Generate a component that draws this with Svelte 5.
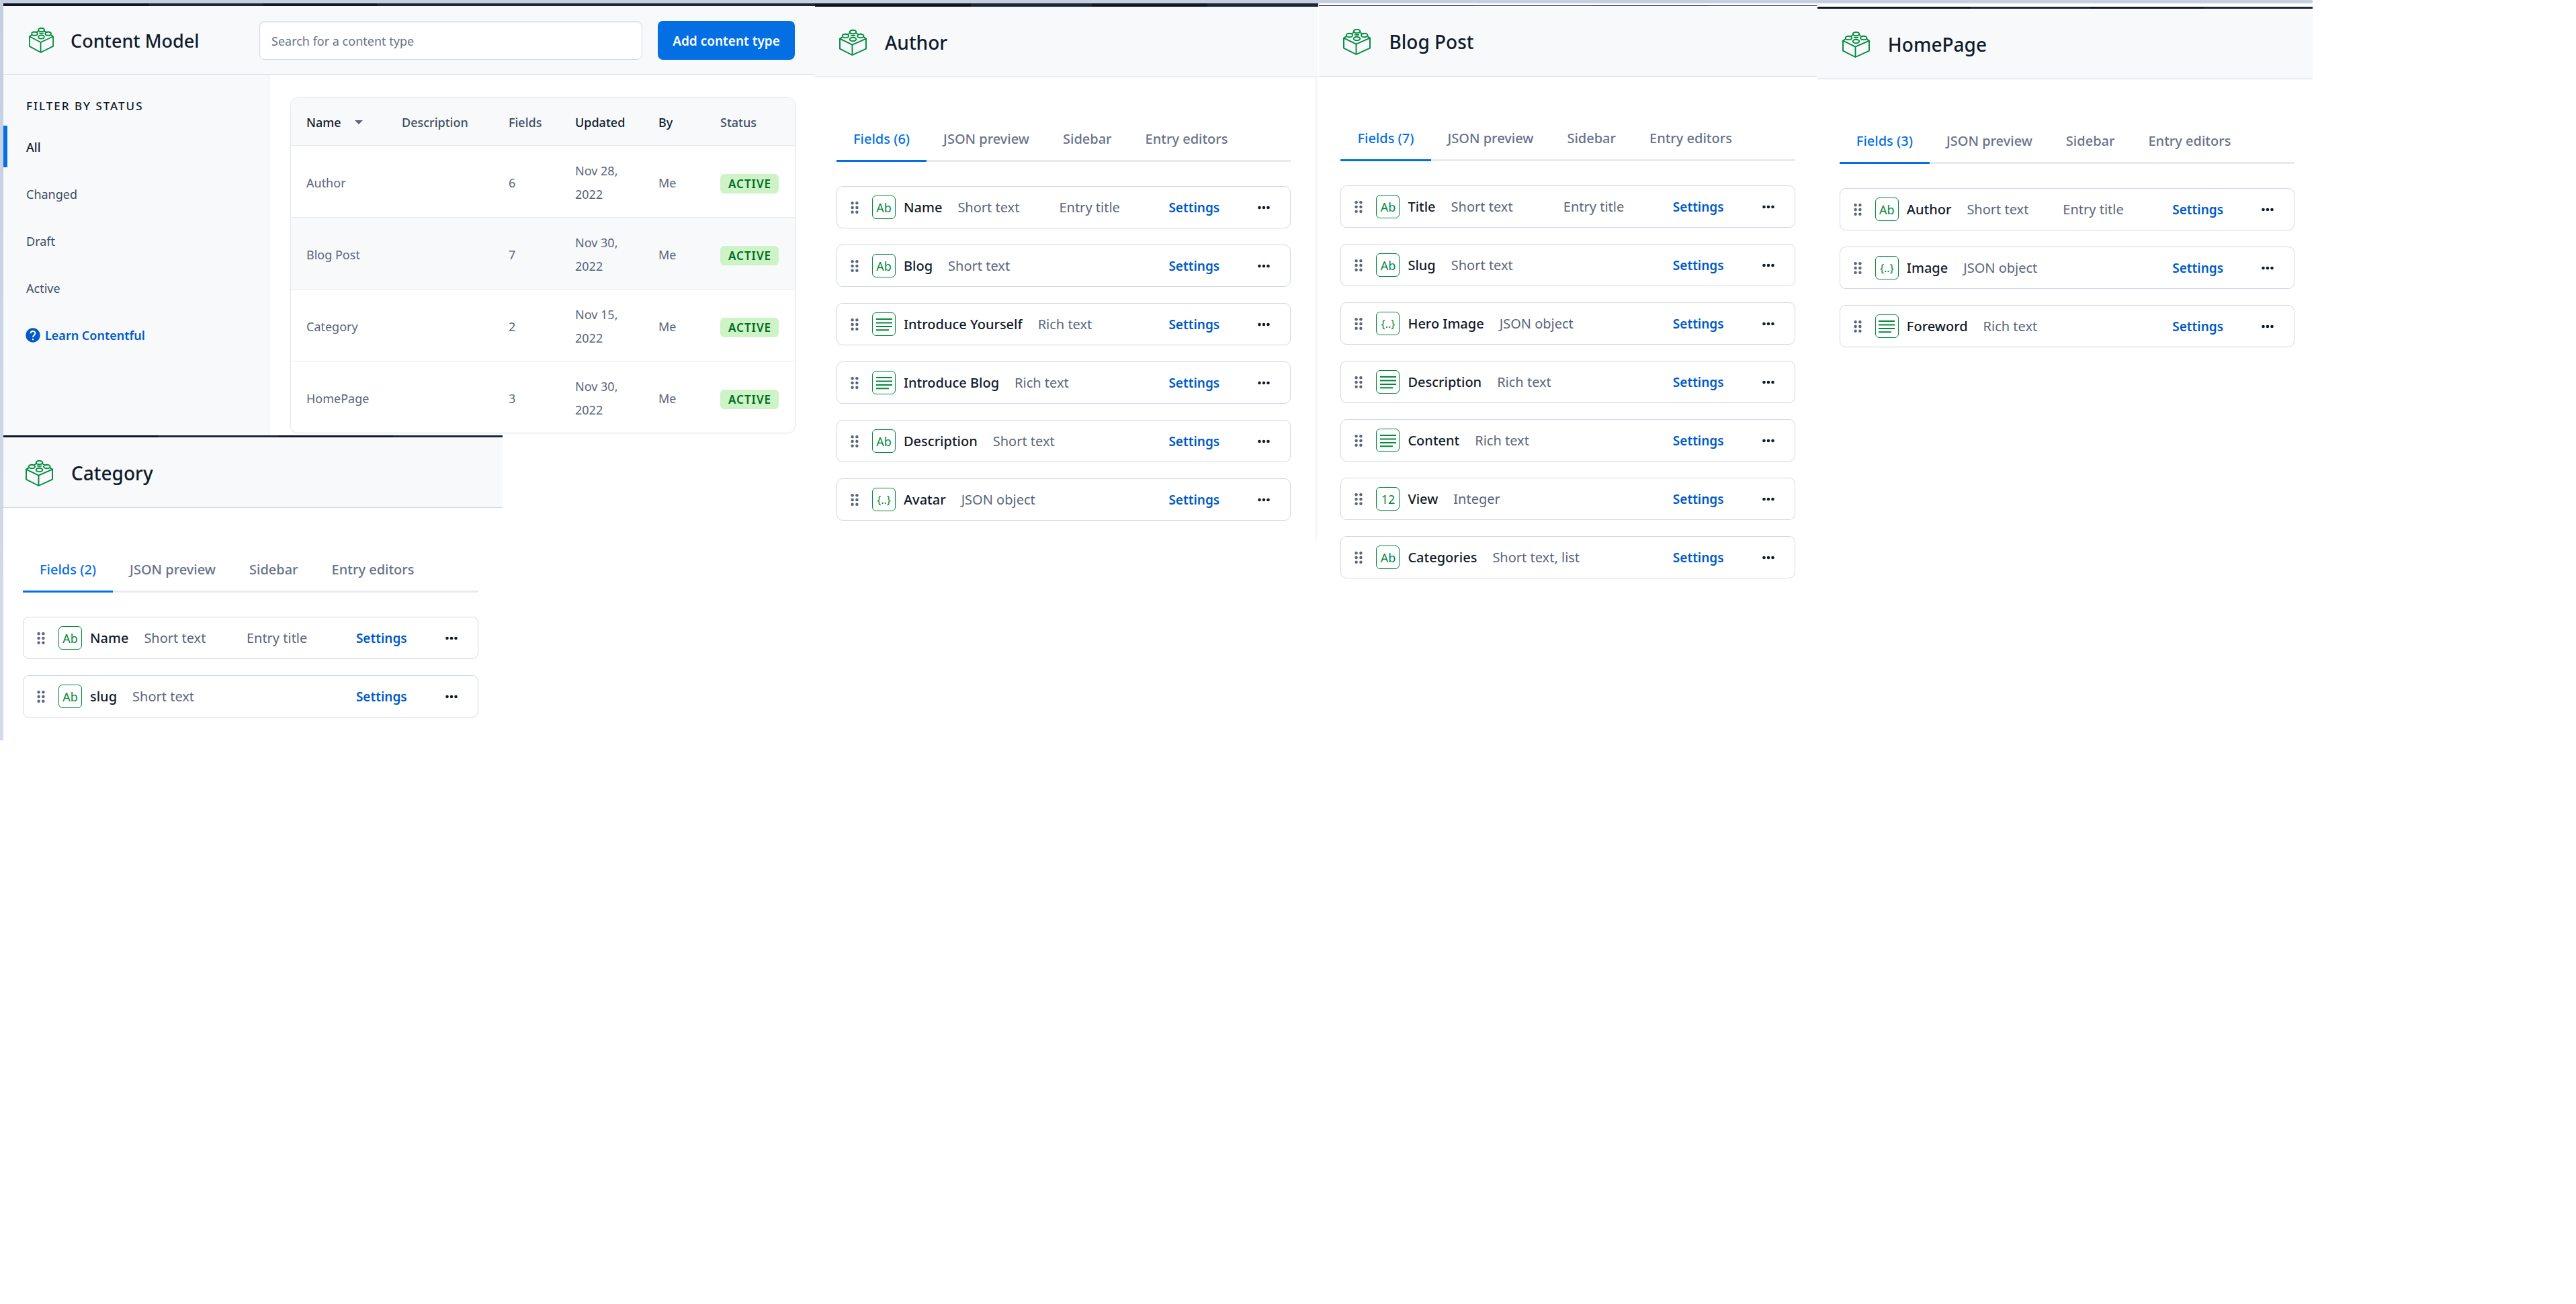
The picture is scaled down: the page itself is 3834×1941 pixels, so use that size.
<script>
  const filters = ['All', 'Changed', 'Draft', 'Active'];
  let activeFilter = $state('All');

  const contentTypes = [
    { name: 'Author', fields: 6, updated: 'Nov 28, 2022', by: 'Me' },
    { name: 'Blog Post', fields: 7, updated: 'Nov 30, 2022', by: 'Me', highlighted: true },
    { name: 'Category', fields: 2, updated: 'Nov 15, 2022', by: 'Me' },
    { name: 'HomePage', fields: 3, updated: 'Nov 30, 2022', by: 'Me' }
  ];

  const tabs = ['JSON preview', 'Sidebar', 'Entry editors'];

  const short = (name, entryTitle = false) => ({ name, type: 'Short text', icon: 'Ab', entryTitle });
  const rich = (name) => ({ name, type: 'Rich text', icon: 'lines' });
  const json = (name) => ({ name, type: 'JSON object', icon: '{..}' });

  const author = {
    key: 'author',
    title: 'Author',
    fields: [
      short('Name', true),
      short('Blog'),
      rich('Introduce Yourself'),
      rich('Introduce Blog'),
      short('Description'),
      json('Avatar')
    ]
  };
  const blog = {
    key: 'blog',
    title: 'Blog Post',
    fields: [
      short('Title', true),
      short('Slug'),
      json('Hero Image'),
      rich('Description'),
      rich('Content'),
      { name: 'View', type: 'Integer', icon: '12' },
      { name: 'Categories', type: 'Short text, list', icon: 'Ab' }
    ]
  };
  const home = {
    key: 'home',
    title: 'HomePage',
    fields: [short('Author', true), json('Image'), rich('Foreword')]
  };
  const category = {
    key: 'category',
    title: 'Category',
    fields: [short('Name', true), short('slug')]
  };
</script>

{#snippet brick()}
  <svg class="brick" viewBox="0 0 41 39" preserveAspectRatio="none" aria-hidden="true">
    <path d="M4.6 11.4 1 13.6V28.6L19.5 38 40 28.6V13.6L36.6 11.4" />
    <path d="M1 13.6 19.5 22.6 40 13.6M19.5 22.6V38" />
    <ellipse cx="20.5" cy="3.6" rx="4.8" ry="2.7" />
    <ellipse cx="9.4" cy="9.4" rx="4.8" ry="2.7" />
    <ellipse cx="31.8" cy="9.4" rx="4.8" ry="2.7" />
    <ellipse cx="20.5" cy="14.4" rx="4.8" ry="2.7" />
    <path d="M15.7 3.6V5.5L12.6 7M25.3 3.6V5.5L28.5 7M17 8.3Q20.5 9.6 24 8.3" />
  </svg>
{/snippet}

{#snippet typePanel(panel)}
  <section class="panel {panel.key}">
    <div class="nav-edge"></div>
    <header class="type-header">
      {@render brick()}
      <h2>{panel.title}</h2>
    </header>
    <div class="body">
      <div class="tabs" role="tablist">
        <button class="tab selected" role="tab" aria-selected="true">Fields ({panel.fields.length})</button>
        {#each tabs as tab}
          <button class="tab" role="tab" aria-selected="false">{tab}</button>
        {/each}
      </div>
      <ul class="fields">
        {#each panel.fields as field}
          <li class="field">
            <svg class="grip" viewBox="0 0 12 18" aria-hidden="true">
              <circle cx="2.6" cy="2.3" r="2.2" /><circle cx="9.4" cy="2.3" r="2.2" />
              <circle cx="2.6" cy="9" r="2.2" /><circle cx="9.4" cy="9" r="2.2" />
              <circle cx="2.6" cy="15.7" r="2.2" /><circle cx="9.4" cy="15.7" r="2.2" />
            </svg>
            <span class="kind" class:json={field.icon === '{..}'} aria-hidden="true">
              {#if field.icon === 'lines'}
                <svg viewBox="0 0 24 20"><path d="M0 2H24M0 7.5H24M0 13H24M0 18.3H19" /></svg>
              {:else}
                {field.icon}
              {/if}
            </span>
            <div class="info">
              <span class="name">{field.name}</span>
              <span class="type">{field.type}</span>
            </div>
            {#if field.entryTitle}
              <span class="entry">Entry title</span>
            {/if}
            <div class="action"><button class="settings">Settings</button></div>
            <button class="more" aria-label="More actions for {field.name}">
              <svg viewBox="0 0 18 6" aria-hidden="true">
                <circle cx="2.5" cy="3" r="2.3" /><circle cx="9" cy="3" r="2.3" /><circle cx="15.5" cy="3" r="2.3" />
              </svg>
            </button>
          </li>
        {/each}
      </ul>
    </div>
  </section>
{/snippet}

<main class="board">
  <div class="top-strip"></div>
  <div class="side-strip"></div>

  <div class="first-column">
    <section class="model">
      <div class="nav-edge"></div>
      <header class="model-header">
        {@render brick()}
        <h1>Content Model</h1>
        <input type="search" placeholder="Search for a content type" aria-label="Search for a content type" />
        <button class="add">Add content type</button>
      </header>
      <div class="model-body">
        <aside>
          <h3>FILTER BY STATUS</h3>
          <nav>
            {#each filters as filter}
              <button
                class="filter"
                class:current={filter === activeFilter}
                onclick={() => (activeFilter = filter)}>{filter}</button>
            {/each}
          </nav>
          <a class="learn" href="#learn">
            <svg viewBox="0 0 22 22" aria-hidden="true">
              <circle cx="11" cy="11" r="10.7" />
              <path d="M7.6 8.2C7.6 3.9 14.4 3.9 14.4 8.2C14.4 10.8 11 10.8 11 13.9M11 16V18.2" />
            </svg>
            Learn Contentful
          </a>
        </aside>
        <div class="listing">
          <table>
            <colgroup>
              <col class="c-name" /><col class="c-desc" /><col class="c-fields" />
              <col class="c-updated" /><col class="c-by" /><col class="c-status" />
            </colgroup>
            <thead>
              <tr>
                <th class="sortable">
                  Name<svg class="caret" viewBox="0 0 12 6" aria-hidden="true"><path d="M0 0H12L6 6Z" /></svg>
                </th>
                <th>Description</th>
                <th>Fields</th>
                <th class="sortable">Updated</th>
                <th class="sortable">By</th>
                <th>Status</th>
              </tr>
            </thead>
            <tbody>
              {#each contentTypes as row}
                <tr class:highlighted={row.highlighted}>
                  <td>{row.name}</td>
                  <td></td>
                  <td>{row.fields}</td>
                  <td>{row.updated}</td>
                  <td>{row.by}</td>
                  <td><span class="badge">ACTIVE</span></td>
                </tr>
              {/each}
            </tbody>
          </table>
        </div>
      </div>
    </section>
    {@render typePanel(category)}
  </div>

  {@render typePanel(author)}
  {@render typePanel(blog)}
  {@render typePanel(home)}
</main>

<style>
  :global(body) {
    margin: 0;
    background: #fff;
  }

  .board {
    --ink: #111b2b;
    --blue: #036fe3;
    --link: #0059c8;
    --green: #00893c;
    --haze: #f7f9fb;
    --line: #cfd9e0;
    --soft-line: #e7ebee;
    display: grid;
    grid-template-columns: 5px 1206fr 750fr 742fr 739fr 392fr;
    align-items: start;
    font-family: 'Noto Sans', 'Open Sans', sans-serif;
    color: var(--ink);
  }

  button,
  input {
    font-family: inherit;
    margin: 0;
  }

  button {
    border: 0;
    padding: 0;
    background: none;
    cursor: pointer;
  }

  h1,
  h2,
  h3 {
    margin: 0;
    font-weight: 500;
  }

  .top-strip {
    grid-column: 1 / 6;
    height: 5px;
    background: #c6cfe0;
  }

  .side-strip {
    grid-column: 1;
    align-self: stretch;
    background: linear-gradient(#c6cfe0, #d3dcea);
  }

  .nav-edge {
    height: 3px;
    background: linear-gradient(
      90deg,
      #0e1626 31%,
      #1b2639 31% 55%,
      #111827 55% 78%,
      #1b2639 78%
    );
  }

  .brick {
    flex: none;
    width: 41px;
    height: 39px;
    fill: none;
    stroke: var(--green);
    stroke-width: 1.9;
    stroke-linejoin: round;
  }

  /* Content model overview */

  .model .nav-edge {
    height: 4px;
    background: linear-gradient(
      90deg,
      #0e1626 18%,
      #1b2639 18% 32%,
      #111827 32% 46%,
      #1b2639 46%
    );
  }

  .model-header {
    display: flex;
    align-items: center;
    height: 101px;
    padding: 0 30px 0 38px;
    border-bottom: 1px solid var(--line);
    background: var(--haze);
  }

  .model-header .brick {
    width: 37px;
    height: 38px;
    margin-right: 25px;
  }

  .model-header h1 {
    flex: none;
    width: 281px;
    padding-top: 2px;
    font-size: 27px;
    line-height: 36px;
  }

  .model-header input {
    flex: 1;
    min-width: 0;
    box-sizing: border-box;
    height: 58px;
    margin-right: 23px;
    padding: 2px 17px 0;
    border: 1px solid var(--line);
    border-radius: 8px;
    background: #fff;
    box-shadow: inset 0 2px 1px #f1f4f6;
    color: var(--ink);
    font-size: 18px;
  }

  .model-header input::placeholder {
    color: #67728a;
    opacity: 1;
  }

  .add {
    flex: none;
    width: 204px;
    height: 58px;
    padding-top: 2px;
    border-radius: 8px;
    background: var(--blue);
    color: #fff;
    font-size: 19px;
    font-weight: 600;
  }

  .model-body {
    display: flex;
  }

  aside {
    flex: none;
    box-sizing: border-box;
    width: 396px;
    padding-top: 35px;
    border-right: 1px solid var(--soft-line);
    background: var(--haze);
  }

  h3 {
    margin: 0 0 17px 34px;
    font-size: 17px;
    line-height: 24px;
    letter-spacing: 2px;
  }

  nav {
    display: grid;
    gap: 8px;
  }

  .filter {
    height: 62px;
    padding: 2px 0 0 28px;
    border-left: 6px solid transparent;
    color: #414d63;
    font-size: 18px;
    text-align: left;
  }

  .filter.current {
    border-left-color: var(--blue);
    color: var(--ink);
    font-weight: 500;
  }

  .learn {
    display: flex;
    align-items: center;
    gap: 7px;
    margin: 25px 0 0 33px;
    color: var(--link);
    font-size: 18px;
    font-weight: 600;
    line-height: 30px;
    text-decoration: none;
  }

  .learn svg {
    width: 22px;
    height: 22px;
    fill: var(--link);
  }

  .learn path {
    fill: none;
    stroke: #fff;
    stroke-width: 2;
  }

  .listing {
    flex: 1;
    padding: 34px 29px 3px 31px;
    background: #fff;
  }

  table {
    width: 100%;
    table-layout: fixed;
    border: 1px solid var(--soft-line);
    border-radius: 12px;
    border-spacing: 0;
    overflow: hidden;
    box-shadow: 0 0 1px 1px #f3f5f7;
    font-size: 18px;
    line-height: 35px;
  }

  .c-name { width: 142px; }
  .c-desc { width: 159px; }
  .c-fields { width: 99px; }
  .c-updated { width: 124px; }
  .c-by { width: 92px; }
  .c-status { width: 134px; }

  th {
    padding: 19px 0 16px 23px;
    border-bottom: 1px solid var(--soft-line);
    background: var(--haze);
    color: #414d63;
    font-weight: 500;
    text-align: left;
  }

  th.sortable {
    color: var(--ink);
  }

  .caret {
    width: 12px;
    height: 6px;
    margin: 0 0 4px 20px;
    fill: #5a657c;
  }

  td {
    padding: 20px 22px 16px 23px;
    border-bottom: 1px solid var(--soft-line);
    color: #5a657c;
  }

  tr:last-child td {
    border-bottom: 0;
  }

  .highlighted td {
    background: var(--haze);
  }

  .badge {
    display: inline-block;
    padding: 0 11px 0 12px;
    border-radius: 6px;
    background: #cdf3c6;
    color: #006d23;
    font-size: 17px;
    font-weight: 600;
    line-height: 29px;
    letter-spacing: 1px;
    vertical-align: middle;
  }

  /* Content type panels */

  .type-header {
    display: flex;
    align-items: center;
    gap: 27px;
    height: 102px;
    padding-top: 2px;
    padding-left: calc(var(--left) + 4px);
    border-bottom: 1px solid var(--line);
    background: var(--haze);
  }

  h2 {
    font-size: 28px;
    line-height: 38px;
  }

  .body {
    padding: 71px var(--right) 34px var(--left);
  }

  .category {
    --left: 29px;
    --right: 36px;
    width: 61.5%;
  }

  .author {
    --left: 32px;
    --right: 41px;
  }

  .author .nav-edge {
    height: 5px;
  }

  .author .body {
    padding-right: 38px;
    padding-bottom: 28px;
    border-right: 3px solid #f9fafb;
    box-shadow: inset -1px 0 #e5eaed;
  }

  .blog {
    --left: 32px;
    --right: 32px;
    padding-top: 3px;
    border-left: 1px solid #fff;
  }

  .blog .nav-edge {
    height: 1px;
  }

  .home {
    --left: 33px;
    --right: 27px;
    padding-top: 5px;
    border-left: 1px solid #fff;
  }

  .tabs {
    display: flex;
    border-bottom: 3px solid var(--soft-line);
  }

  .tab {
    margin-bottom: -3px;
    padding: 7px 25px 17px;
    border-bottom: 3px solid transparent;
    color: #67728a;
    font-size: 20px;
    font-weight: 500;
    line-height: 28px;
    white-space: nowrap;
  }

  .tab.selected {
    border-bottom-color: var(--blue);
    color: var(--blue);
  }

  .fields {
    display: grid;
    gap: 24px;
    margin: 36px 0 0;
    padding: 0;
    list-style: none;
  }

  .field {
    display: flex;
    align-items: center;
    box-sizing: border-box;
    height: 63px;
    padding: 0 30px 0 20px;
    border: 1px solid var(--line);
    border-radius: 9px;
    background: #fff;
    font-size: 20px;
    line-height: 28px;
    white-space: nowrap;
  }

  .grip {
    flex: none;
    width: 12px;
    height: 18px;
    margin-right: 20px;
    fill: #5a657c;
  }

  .kind {
    display: flex;
    flex: none;
    align-items: center;
    justify-content: center;
    box-sizing: border-box;
    width: 35px;
    height: 35px;
    margin-right: 12px;
    border: 1px solid var(--green);
    border-radius: 6px;
    color: var(--green);
    font-size: 18px;
    line-height: 32px;
  }

  .kind.json {
    font-size: 16px;
  }

  .kind svg {
    width: 24px;
    height: 20px;
    stroke: var(--green);
    stroke-width: 2;
  }

  .info {
    display: flex;
    flex: 1;
    gap: 23px;
    min-width: 0;
  }

  .name {
    font-weight: 500;
  }

  .type {
    color: #5a657c;
  }

  .entry {
    flex: none;
    width: 163px;
    color: #5a657c;
  }

  .action {
    flex: none;
    width: 133px;
  }

  .settings {
    color: var(--link);
    font-size: 19px;
    font-weight: 600;
    line-height: 28px;
  }

  .more {
    display: flex;
    flex: none;
    fill: var(--ink);
  }

  .more svg {
    width: 18px;
    height: 6px;
  }
</style>
